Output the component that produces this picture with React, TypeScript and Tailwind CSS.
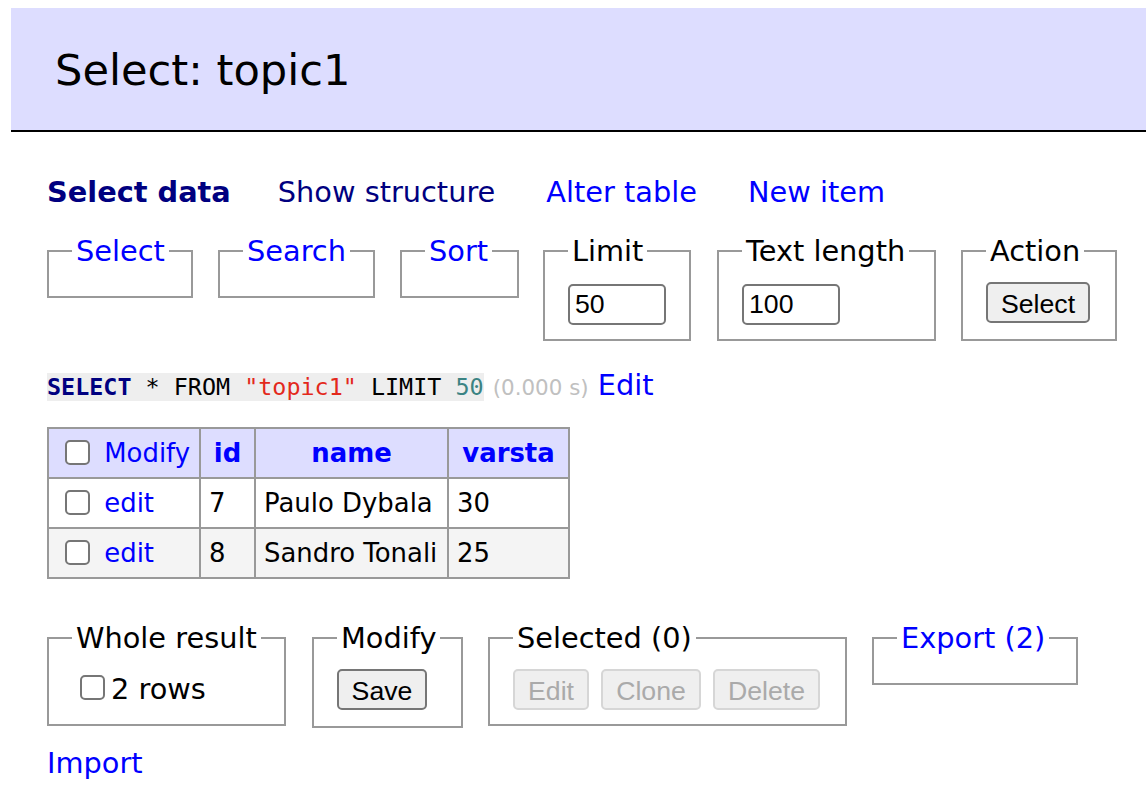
import type { ReactNode } from "react";

const btnFont = "font-['Liberation_Sans',Arial,sans-serif]";

function Box({ legend, link = false, className = "", children }: { legend: string; link?: boolean; className?: string; children?: ReactNode }) {
  return (
    <fieldset className={`shrink-0 min-w-0 border-2 border-[#999] px-[23px] pt-[14px] pb-[14px] ${className}`}>
      <legend
        className={
          link
            ? "px-[4px] leading-[34px] whitespace-nowrap text-[#00f]"
            : "px-[4px] leading-[34px] whitespace-nowrap text-black"
        }
      >
        {legend}
      </legend>
      {children}
    </fieldset>
  );
}

function Check() {
  return (
    <input
      type="checkbox"
      className="appearance-none inline-block align-middle w-[25px] h-[25px] border-2 border-[#767676] rounded-[5px] bg-white mt-[-4px]"
    />
  );
}

function Field({ value }: { value: string }) {
  return (
    <input
      defaultValue={value}
      className={`w-[98px] h-[41px] border-2 border-[#767676] rounded-[5px] px-[5px] text-[26.67px] bg-white text-black ${btnFont}`}
    />
  );
}

function Button({ label, width, disabled = false }: { label: string; width: string; disabled?: boolean }) {
  return (
    <button
      disabled={disabled}
      className={
        disabled
          ? `${width} h-[41px] border-2 border-[#d6d6d6] rounded-[5px] bg-[#efefef] text-[26.67px] text-[#aaa] ${btnFont}`
          : `${width} h-[41px] border-2 border-[#767676] rounded-[5px] bg-[#efefef] text-[26.67px] text-black ${btnFont}`
      }
    >
      {label}
    </button>
  );
}

const rows = [
  { id: 7, name: "Paulo Dybala", varsta: 30 },
  { id: 8, name: "Sandro Tonali", varsta: 25 },
];

export default function App() {
  return (
    <div className="min-h-screen bg-white pt-[8px] text-[28.8px] text-black font-['DejaVu_Sans',Verdana,sans-serif]">
      <h2 className="ml-[11px] bg-[#ddf] border-b-2 border-black pl-[44px] pt-[35px] pb-[33px] text-[43.2px] leading-[54px] font-normal">
        Select: topic1
      </h2>

      <div className="pl-[47px]">
        <p className="mt-[43px] flex leading-[34px]">
          <a className="font-bold text-[#000080]">Select data</a>
          <a className="ml-[47px] text-[#000080]">Show structure</a>
          <a className="ml-[51px] text-[#00f]">Alter table</a>
          <a className="ml-[51px] text-[#00f]">New item</a>
        </p>

        <form className="mt-[25px] flex items-start">
          <Box legend="Select" link className="w-[146px]" />
          <Box legend="Search" link className="ml-[25px] w-[157px]" />
          <Box legend="Sort" link className="ml-[25px] w-[119px]" />
          <Box legend="Limit" className="ml-[24px] w-[148px]">
            <Field value="50" />
          </Box>
          <Box legend="Text length" className="ml-[26px] w-[219px]">
            <Field value="100" />
          </Box>
          <Box legend="Action" className="ml-[25px] w-[156px]">
            <Button label="Select" width="w-[104px]" />
          </Box>
        </form>

        <p className="mt-[27px] leading-[34px]">
          <code className="bg-[#eee] text-[23.4px] font-['DejaVu_Sans_Mono',monospace]">
            <span className="font-bold text-[#000080]">SELECT</span> * FROM{" "}
            <span className="text-[#e3291c]">"topic1"</span> LIMIT <span className="text-[#3b8383]">50</span>
          </code>{" "}
          <span className="text-[21.4px] text-[#c0c0c0]">(0.000 s)</span> <a className="text-[#00f]">Edit</a>
        </p>

        <table className="mt-[22px] border-collapse text-[25.92px]">
          <thead>
            <tr className="bg-[#ddf]">
              <td className="border-2 border-[#999] w-[152px] h-[50px] pl-[8px] pr-[8px] text-left whitespace-nowrap">
                <span className="ml-[8px] mr-[6px]">
                  <Check />
                </span>{" "}
                <a className="text-[#00f]">Modify</a>
              </td>
              <th className="border-2 border-[#999] w-[55px] px-[8px] text-[#00f] font-bold">id</th>
              <th className="border-2 border-[#999] w-[193px] px-[8px] text-[#00f] font-bold">name</th>
              <th className="border-2 border-[#999] w-[121px] px-[8px] text-[#00f] font-bold">varsta</th>
            </tr>
          </thead>
          <tbody>
            {rows.map((r, i) => (
              <tr key={r.id} className={i % 2 ? "bg-[#f4f4f4]" : "bg-white"}>
                <td className="border-2 border-[#999] h-[50px] px-[8px] whitespace-nowrap">
                  <span className="ml-[8px] mr-[6px]">
                    <Check />
                  </span>{" "}
                  <a className="text-[#00f]">edit</a>
                </td>
                <td className="border-2 border-[#999] px-[8px]">{r.id}</td>
                <td className="border-2 border-[#999] px-[8px] whitespace-nowrap">{r.name}</td>
                <td className="border-2 border-[#999] px-[8px]">{r.varsta}</td>
              </tr>
            ))}
          </tbody>
        </table>

        <form className="mt-[42px] flex items-start">
          <Box legend="Whole result" className="w-[239px]">
            <label className="flex items-center h-[41px] ml-[8px]">
              <Check />
              <span className="ml-[6px]">2 rows</span>
            </label>
          </Box>
          <Box legend="Modify" className="ml-[26px] w-[151px]">
            <Button label="Save" width="w-[90px]" />
          </Box>
          <Box legend="Selected (0)" className="ml-[25px] w-[359px]">
            <div className="flex gap-[12px]">
              <Button label="Edit" width="w-[76px]" disabled />
              <Button label="Clone" width="w-[100px]" disabled />
              <Button label="Delete" width="w-[107px]" disabled />
            </div>
          </Box>
          <Box legend="Export (2)" link className="ml-[25px] w-[206px]" />
        </form>

        <p className="mt-[18px] leading-[34px]">
          <a className="text-[#00f]">Import</a>
        </p>
      </div>
    </div>
  );
}
